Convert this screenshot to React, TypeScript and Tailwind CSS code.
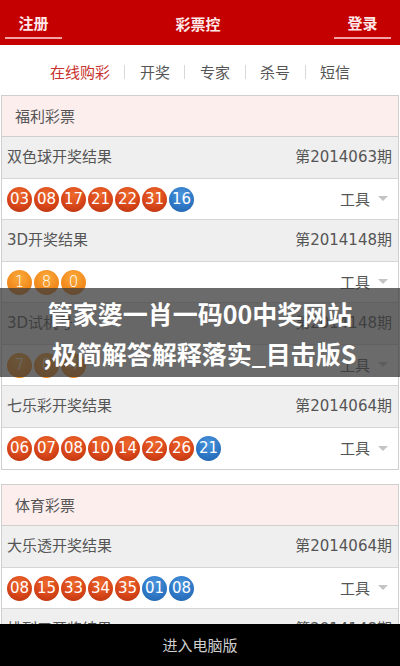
import React from 'react';

type Ball = { n: string; c: 'red' | 'blue' | 'orange' };

interface Draw {
  name: string;
  issue: string;
  balls: Ball[];
}

const r = (n: string): Ball => ({ n, c: 'red' });
const b = (n: string): Ball => ({ n, c: 'blue' });
const o = (n: string): Ball => ({ n, c: 'orange' });

const welfare: Draw[] = [
  { name: '双色球开奖结果', issue: '第2014063期', balls: [r('03'), r('08'), r('17'), r('21'), r('22'), r('31'), b('16')] },
  { name: '3D开奖结果', issue: '第2014148期', balls: [o('1'), o('8'), o('0')] },
  { name: '3D试机号', issue: '第2014148期', balls: [o('7'), o('0'), o('4')] },
  { name: '七乐彩开奖结果', issue: '第2014064期', balls: [r('06'), r('07'), r('08'), r('10'), r('14'), r('22'), r('26'), b('21')] },
];

const sports: Draw[] = [
  { name: '大乐透开奖结果', issue: '第2014064期', balls: [r('08'), r('15'), r('33'), r('34'), r('35'), b('01'), b('08')] },
  { name: '排列三开奖结果', issue: '第2014148期', balls: [o('5'), o('2'), o('9')] },
  { name: '排列五开奖结果', issue: '第2014148期', balls: [o('5'), o('2'), o('9'), o('3'), o('6')] },
];

const ballColor = {
  red: 'bg-[radial-gradient(circle_at_50%_30%,#ee6a2c_0%,#d8461a_55%,#b3300c_100%)]',
  blue: 'bg-[radial-gradient(circle_at_50%_30%,#4a94dc_0%,#2f78c6_55%,#1f5fa8_100%)]',
  orange: 'bg-[radial-gradient(circle_at_50%_30%,#fbab3c_0%,#f38c1f_55%,#e2760e_100%)]',
};

export default function App() {
  return (
    <div className="relative min-h-screen bg-white pb-[60px] font-['Noto_Sans_CJK_SC',sans-serif]">
      {/* Header */}
      <header className="flex h-[45px] items-start justify-between bg-[#c40000]">
        <div className="ml-[5px] flex h-[39px] w-[57px] items-center justify-center border-b-2 border-[#f3a3a3] pt-[10px] text-[15px] font-bold text-[#ffe8e8]">
          注册
        </div>
        <div className="flex h-[39px] items-center pt-[10px] text-[15px] font-bold text-[#ffe8e8]">彩票控</div>
        <div className="mr-[9px] flex h-[39px] w-[57px] items-center justify-center border-b-2 border-[#f3a3a3] pt-[10px] text-[15px] font-bold text-[#ffe8e8]">
          登录
        </div>
      </header>

      {/* Nav */}
      <nav className="flex h-[50px] items-center justify-center gap-[14.5px] pt-[4px] text-[15px] text-[#555]">
        <span className="text-[#c8302c]">在线购彩</span>
        <span className="h-[14px] w-px bg-[#d8d8d8]" />
        <span>开奖</span>
        <span className="h-[14px] w-px bg-[#d8d8d8]" />
        <span>专家</span>
        <span className="h-[14px] w-px bg-[#d8d8d8]" />
        <span>杀号</span>
        <span className="h-[14px] w-px bg-[#d8d8d8]" />
        <span>短信</span>
      </nav>

      <Section title="福利彩票" draws={welfare} />
      <div className="h-[14px]" />
      <Section title="体育彩票" draws={sports} />

      {/* Promo overlay */}
      <div className="absolute left-0 right-0 top-[288px] flex h-[89px] flex-col items-center justify-center bg-[rgba(58,58,58,0.75)] text-[25px] font-bold leading-[40px] text-white">
        <div>管家婆一肖一码00中奖网站</div>
        <div>,极简解答解释落实_目击版S</div>
      </div>

      {/* Footer */}
      <div className="fixed bottom-0 left-0 right-0 flex h-[42px] items-center justify-center bg-black text-[15px] text-[#cfcfcf]">
        进入电脑版
      </div>
    </div>
  );
}

function Section(props: { title: string; draws: Draw[] }) {
  const { title, draws } = props;
  return (
    <section className="mx-[1px] border border-[#cfcfcf]">
      <div className="flex h-[41px] items-center border-b border-[#cfcfcf] bg-[#fdeeee] pl-[13px] text-[15px] text-[#555]">
        {title}
      </div>
      {draws.map((d, i) => (
        <div key={d.name}>
          <div className="flex h-[42px] items-center justify-between border-b border-[#d6d6d6] bg-[#efefef] pl-[5px] pr-[6px] font-['DejaVu_Sans','Noto_Sans_CJK_SC',sans-serif] text-[15px] text-[#555]">
            <span>{d.name}</span>
            <span>{d.issue}</span>
          </div>
          <div
            className={
              'flex h-[41px] items-center justify-between bg-white pl-[5px] pr-[10px] ' +
              (i < draws.length - 1 ? 'border-b border-[#d6d6d6]' : '')
            }
          >
            <div className="flex gap-[2px]">
              {d.balls.map((ball, k) => (
                <span
                  key={k}
                  className={
                    'flex h-[25px] w-[25px] items-center justify-center rounded-full font-["DejaVu_Sans",sans-serif] text-[15px] leading-none text-white ' +
                    ballColor[ball.c] +
                    (ball.c === 'orange' ? ' font-light' : '')
                  }
                >
                  {ball.n}
                </span>
              ))}
            </div>
            <div className="flex items-center gap-[8px] text-[15px] text-[#555]">
              <span>工具</span>
              <svg width="10" height="6" viewBox="0 0 10 6">
                <path d="M0 0 L10 0 L5 5 Z" fill="#c4c4c4" />
              </svg>
            </div>
          </div>
        </div>
      ))}
    </section>
  );
}
